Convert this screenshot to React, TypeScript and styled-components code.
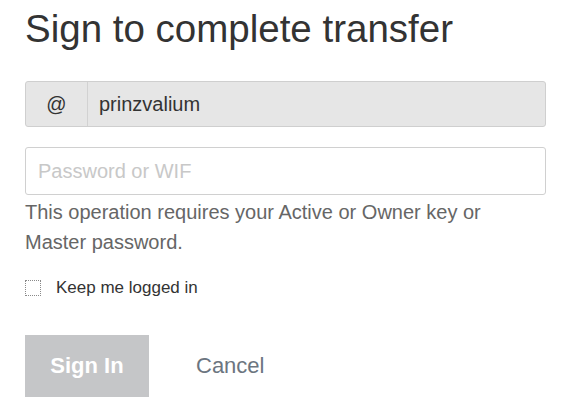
import styled, { createGlobalStyle } from 'styled-components';

const GlobalStyle = createGlobalStyle`
  body {
    margin: 0;
    background: #ffffff;
    font-family: "Liberation Sans", Arial, sans-serif;
  }
`;

const Wrapper = styled.div`
  width: 521px;
  padding-left: 25px;
  display: flex;
  flex-direction: column;
`;

const Title = styled.h3`
  margin: 0;
  padding-top: 8px;
  font-size: 38.5px;
  font-weight: normal;
  line-height: 42px;
  color: #333333;
`;

const InputGroup = styled.div`
  display: flex;
  height: 46px;
  margin-top: 31px;
  background: #e6e6e6;
  border: 1px solid #cfcfcf;
  border-radius: 3px;
  box-sizing: border-box;
`;

const Addon = styled.div`
  width: 61px;
  display: flex;
  align-items: center;
  justify-content: center;
  border-right: 1px solid #d2d2d2;
  font-size: 20px;
  color: #333333;
`;

const GroupValue = styled.div`
  flex: 1;
  display: flex;
  align-items: center;
  padding-left: 11px;
  font-size: 20px;
  color: #333333;
`;

const PasswordInput = styled.input`
  height: 48px;
  margin-top: 20px;
  padding: 0 12px;
  border: 1px solid #d0d0d0;
  border-radius: 3px;
  box-sizing: border-box;
  font-family: "Liberation Sans", Arial, sans-serif;
  font-size: 20px;
  color: #333333;
  outline: none;

  &::placeholder {
    color: #c8c8c8;
  }
`;

const Help = styled.p`
  margin: 2px 0 0;
  font-size: 20px;
  line-height: 30px;
  color: #666666;
`;

const CheckRow = styled.label`
  display: flex;
  align-items: center;
  gap: 15px;
  margin-top: 21px;
  font-size: 17px;
  color: #333333;
`;

const Box = styled.span`
  width: 16px;
  height: 16px;
  box-sizing: border-box;
  border: 1px dotted #8a8a8a;
  background: #ffffff;
`;

const Actions = styled.div`
  display: flex;
  align-items: center;
  margin-top: 37px;
`;

const SignButton = styled.button`
  width: 124px;
  height: 62px;
  border: none;
  background: #c5c6c8;
  color: #ffffff;
  font-family: "Liberation Sans", Arial, sans-serif;
  font-size: 22px;
  font-weight: bold;
  cursor: not-allowed;
`;

const CancelButton = styled.button`
  margin-left: 47px;
  padding: 0;
  border: none;
  background: none;
  color: #6c7580;
  font-family: "Liberation Sans", Arial, sans-serif;
  font-size: 22px;
`;

export default function App() {
  return (
    <>
      <GlobalStyle />
      <Wrapper>
        <Title>Sign to complete transfer</Title>
        <InputGroup>
          <Addon>@</Addon>
          <GroupValue>prinzvalium</GroupValue>
        </InputGroup>
        <PasswordInput type="password" placeholder="Password or WIF" />
        <Help>This operation requires your Active or Owner key or Master password.</Help>
        <CheckRow>
          <Box />
          Keep me logged in
        </CheckRow>
        <Actions>
          <SignButton disabled>Sign In</SignButton>
          <CancelButton>Cancel</CancelButton>
        </Actions>
      </Wrapper>
    </>
  );
}
